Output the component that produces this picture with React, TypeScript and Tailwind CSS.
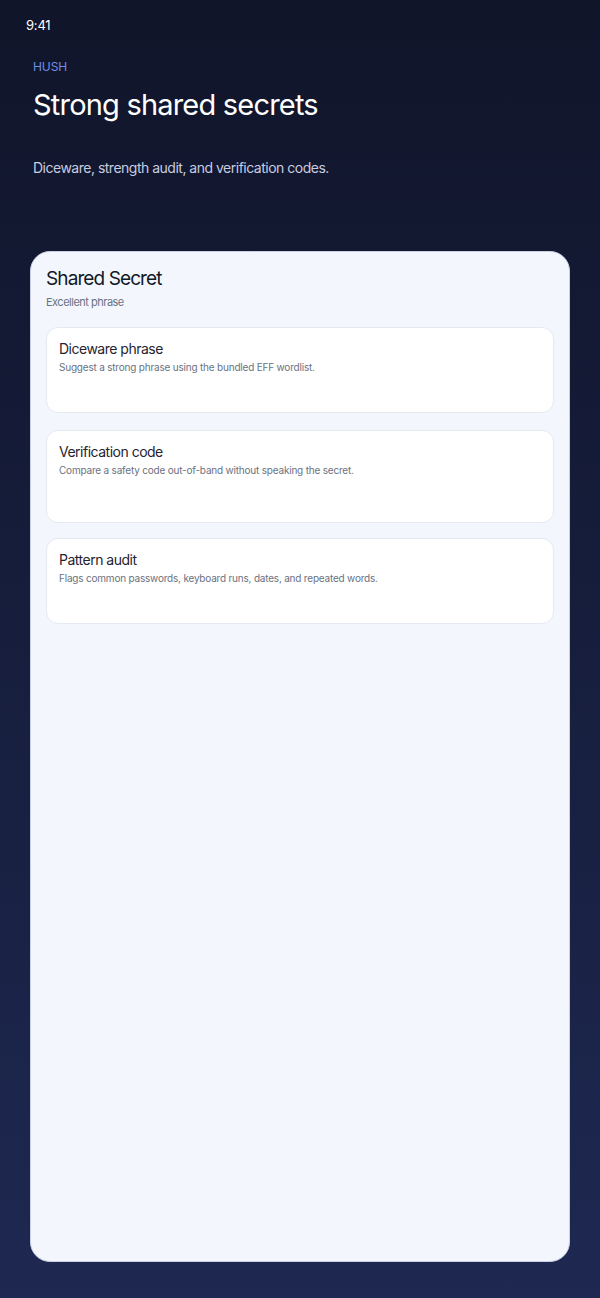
import React from "react";

const items = [
  { title: "Diceware phrase", desc: "Suggest a strong phrase using the bundled EFF wordlist.", h: "h-[86px]", mt: "mt-0" },
  { title: "Verification code", desc: "Compare a safety code out-of-band without speaking the secret.", h: "h-[93px]", mt: "mt-[17px]" },
  { title: "Pattern audit", desc: "Flags common passwords, keyboard runs, dates, and repeated words.", h: "h-[86px]", mt: "mt-[15px]" },
];

export default function App() {
  return (
    <div
      className="w-[600px] h-[1298px] bg-gradient-to-b from-[#10152a] to-[#1e2851] flex flex-col"
      style={{ fontFamily: "Inter, 'Noto Sans', sans-serif" }}
    >
      <div className="pl-[26px] pt-[16px] text-[13px] leading-[18px] text-white tracking-[-0.2px]">9:41</div>
      <div className="pl-[33px] pt-[25px]">
        <div className="text-[12px] leading-[16px] text-[#6f90e6] tracking-[-0.1px]">HUSH</div>
        <h1 className="mt-[10px] text-[29px] leading-[40px] text-white tracking-[-0.8px]">Strong shared secrets</h1>
        <p className="mt-[33px] text-[14px] leading-[20px] text-[#c7cce0] tracking-[-0.5px]">
          Diceware, strength audit, and verification codes.
        </p>
      </div>
      <div className="mx-[30px] mt-[73px] h-[1011px] rounded-[20px] bg-[#f3f7fd] border border-[#c9d0e3] px-[15px] pt-[14px]">
        <div className="text-[19px] leading-[26px] text-[#111827] tracking-[-0.9px]">Shared Secret</div>
        <div className="mt-[2px] text-[11px] leading-[16px] text-[#6b7280] tracking-[-0.5px]">Excellent phrase</div>
        <div className="mt-[17px] flex flex-col">
          {items.map((it) => (
            <div
              key={it.title}
              className={`${it.h} ${it.mt} rounded-[12px] bg-white border border-[#e4e9f2] px-[12px] pt-[11px]`}
            >
              <div className="text-[14px] leading-[20px] text-[#1f2430] tracking-[-0.5px]">{it.title}</div>
              <div className="mt-[0px] text-[10px] leading-[16px] text-[#6b7280] tracking-[-0.2px]">{it.desc}</div>
            </div>
          ))}
        </div>
      </div>
    </div>
  );
}
